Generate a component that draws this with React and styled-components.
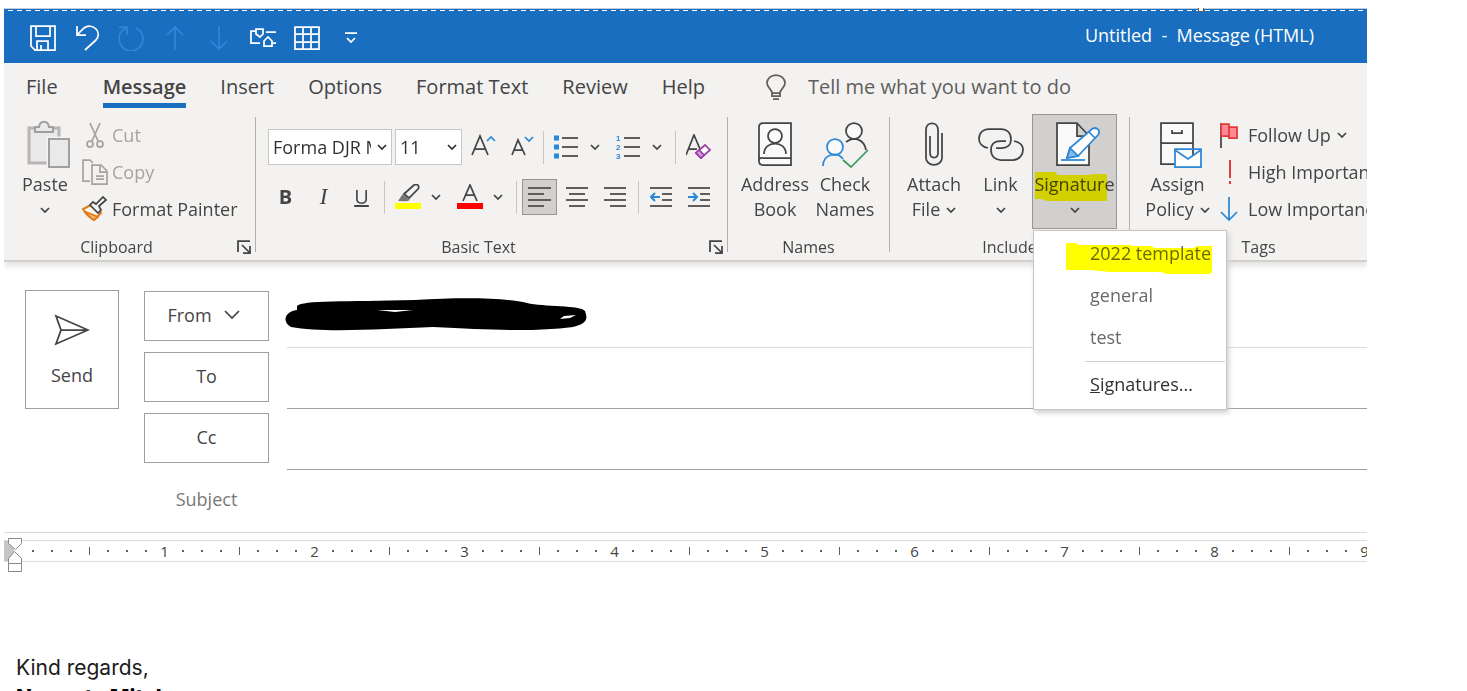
import styled, { createGlobalStyle, css } from 'styled-components';

const GlobalStyle = createGlobalStyle`
    :root {
        --blue: #196ebf;
        --sky: #2b88d8;
        --grey: #f3f2f1;
        --line: #b3b0ad;
        --ink: #444444;
        --muted: #a6a4a2;
    }

    * {
        box-sizing: border-box;
    }

    body {
        margin: 0;
        background: #fff;
        color: var(--ink);
        font-family: "Open Sans", "Noto Sans", sans-serif;
        font-size: 18px;
    }

    button, input, select {
        font: inherit;
        color: inherit;
    }

    button {
        padding: 0;
        border: 0;
        background: none;
    }

    svg {
        display: block;
        flex: none;
    }
`;

const Window = styled.div`
    height: 100vh;
    padding: 8px 100px 0 4px;
    overflow: hidden;
`;

const TitleBar = styled.header`
    position: relative;
    display: flex;
    justify-content: space-between;
    align-items: center;
    height: 55px;
    padding: 0 53px 0 20px;
    border-top: 1px solid #c3ccd8;
    background: var(--blue);
    color: #fff;

    h1 {
        margin: 0;
        padding-bottom: 2px;
        font-size: 18px;
        font-weight: 400;
        white-space: pre;
    }
`;

const DashedEdge = styled.div`
    position: absolute;
    top: 1px;
    left: 0;
    right: 0;
    height: 1px;
    background: repeating-linear-gradient(90deg, transparent 0 4px, #fff 4px 9px);
`;

const DragHandle = styled.span`
    position: absolute;
    top: -1px;
    right: 163px;
    width: 6px;
    height: 4px;
    border: 1px solid #605e5c;
    border-top: 0;
    background: #fff;
`;

const QuickAccess = styled.div`
    display: flex;
    align-items: center;
    height: 54px;
    padding-top: 4px;
`;

const QuickButton = styled.button`
    display: grid;
    place-items: center;
    width: 38px;
    height: 38px;
    margin-right: 6px;
    color: ${({disabled}) => disabled ? '#2f87d8' : '#fff'};
`;

const Tabs = styled.nav`
    display: flex;
    gap: 34px;
    height: 47px;
    padding: 0 22px;
    background: var(--grey);
    font-size: 20px;
    line-height: 48px;
    white-space: nowrap;
`;

const Tab = styled.a`
    color: inherit;
    text-decoration: none;

    &:first-child {
        margin-right: 11px;
    }

    ${({$active}) => $active && css`
        height: 45px;
        border-bottom: 5px solid var(--blue);
        font-weight: 600;
    `}
`;

const TellMe = styled.label`
    display: flex;
    flex: 1;
    align-items: center;
    gap: 22px;
    margin-left: 27px;
    color: #605e5c;

    input {
        flex: 1;
        min-width: 0;
        padding: 0;
        border: 0;
        background: none;

        &::placeholder {
            color: #605e5c;
            opacity: 1;
        }
    }
`;

const Ribbon = styled.div`
    display: flex;
    height: 152px;
    padding-top: 4px;
    background: var(--grey);
    border-bottom: 2px solid #d2d0ce;
    box-shadow: 0 4px 6px #e4e3e2;
    clip-path: inset(0 0 -200px 0);
`;

const Group = styled.section`
    display: flex;
    flex: none;
    flex-direction: column;
    justify-content: space-between;
    width: ${({$width}) => $width}px;
    height: 140px;
`;

const GroupBody = styled.div`
    display: flex;
    padding: 0 9px 0 ${({$left}) => $left}px;
`;

const GroupFooter = styled.footer`
    display: flex;
    align-items: center;
    height: 14px;
    font-size: 16px;
    line-height: 14px;

    h2 {
        flex: 1;
        margin: 0;
        font-size: inherit;
        font-weight: 400;
        text-align: center;
    }

    button {
        width: 26px;
        padding-left: 8px;
    }
`;

const GroupLine = styled.div`
    flex: none;
    width: 1px;
    height: 135px;
    margin-top: 3px;
    background: var(--line);
`;

const BigButton = styled.button`
    display: flex;
    flex: none;
    flex-direction: column;
    align-items: center;
    width: ${({$width}) => $width}px;
    height: 115px;
    padding-top: 6px;
    line-height: 25px;
    white-space: nowrap;

    > svg {
        margin-bottom: 4px;
    }

    ${({$pressed}) => $pressed && css`
        padding-top: 5px;
        border: 1px solid #979593;
        background: #d2d0ce;
    `}
`;

const ChevronLine = styled.span`
    display: flex;
    align-items: center;
    gap: 6px;
    height: 25px;
`;

const SmallList = styled.div`
    display: flex;
    flex-direction: column;
    margin-top: 2px;
`;

const SmallButton = styled.button`
    display: flex;
    align-items: center;
    gap: 4px;
    height: 37px;
    color: ${({disabled}) => disabled ? 'var(--muted)' : 'inherit'};
    white-space: nowrap;
`;

const FormatRows = styled.div`
    display: grid;
    gap: 14px;
    padding-top: 15px;
`;

const FormatRow = styled.div`
    display: flex;
    align-items: center;
    gap: 3px;
    height: 36px;
`;

const Combo = styled.label`
    display: grid;
    align-items: center;
    width: ${({$width}) => $width}px;
    height: 36px;
    border: 1px solid #c8c6c4;
    background: #fff;
    color: #323130;

    select, svg {
        grid-area: 1 / 1;
    }

    select {
        width: 100%;
        height: 34px;
        padding: 0 20px 0 4px;
        border: 0;
        background: none;
        appearance: none;
        text-overflow: clip;
    }

    svg {
        justify-self: end;
        margin-right: 4px;
        pointer-events: none;
    }
`;

const IconButton = styled.button`
    display: grid;
    place-items: center;
    width: 35px;
    height: 36px;
    border: 1px solid ${({$pressed}) => $pressed ? '#979593' : 'transparent'};
    background: ${({$pressed}) => $pressed ? '#d2d0ce' : 'none'};
    font-size: 20px;
    line-height: 30px;
    font-weight: ${({$bold}) => $bold ? 700 : 400};
`;

const Italic = styled.i`
    font-family: "Liberation Serif", serif;
    font-size: 23px;
`;

const Split = styled.div`
    display: flex;
`;

const ArrowButton = styled.button`
    display: grid;
    justify-content: start;
    align-items: center;
    width: 24px;
    height: 36px;
    padding-left: 6px;
`;

const RowLine = styled.span`
    width: 1px;
    height: 33px;
    margin: 0 2px;
    background: #c8c6c4;
`;

const MenuAnchor = styled.div`
    position: relative;
`;

const Menu = styled.ul`
    position: absolute;
    z-index: 2;
    top: 116px;
    left: 1px;
    width: 194px;
    height: 180px;
    margin: 0;
    padding: 1px;
    border: 1px solid #c8c6c4;
    background: #fff;
    box-shadow: 2px 3px 5px #d2d0ce;
    list-style: none;

    li:last-child {
        margin: 3px 0 0 50px;
        padding-top: 1px;
        border-top: 1px solid #d2d0ce;
    }
`;

const MenuItem = styled.button`
    display: block;
    position: relative;
    height: 42px;
    padding-left: ${({$inset}) => $inset}px;
    color: ${({$dark}) => $dark ? '#323130' : '#6b6967'};
    white-space: nowrap;
`;

const Marker = styled.svg`
    position: absolute;
    top: ${({$top}) => $top}px;
    left: ${({$left}) => $left}px;
    mix-blend-mode: multiply;
`;

const Compose = styled.form`
    display: flex;
    align-items: flex-start;
    gap: 25px;
    padding: 25px 0 1px 21px;
    border-bottom: 1px solid #d9d9d9;
`;

const SendButton = styled.button`
    display: flex;
    flex: none;
    flex-direction: column;
    align-items: center;
    gap: 16px;
    width: 94px;
    height: 119px;
    margin-top: 3px;
    padding-top: 22px;
    border: 1px solid #a19f9d;
`;

const Fields = styled.div`
    flex: 1;
    min-width: 0;
`;

const Field = styled.div`
    display: flex;
    height: 61px;

    > button, > label {
        display: flex;
        justify-content: center;
        align-items: center;
        gap: 12px;
        width: 125px;
        height: 50px;
        margin: 4px 18px 0 0;
    }

    > button {
        padding: 0 6px 2px 0;
        border: 1px solid #a19f9d;
    }

    > button:only-of-type:not(:has(svg)) {
        padding-right: 0;
    }

    > label {
        color: #7a7876;
    }
`;

const Entry = styled.div`
    display: flex;
    flex: 1;
    align-items: center;
    border-bottom: 1px solid ${({$line}) => $line};

    input {
        flex: 1;
        min-width: 0;
        border: 0;
        outline: 0;
        background: none;
    }
`;

const Redacted = styled.svg`
    margin: -4px 0 0 -2px;
`;

const Ruler = styled.div`
    position: relative;
    display: flex;
    height: 22px;
    margin-top: 7px;
    border: solid #dddbda;
    border-width: 1px 0;
    font-size: 15px;
    line-height: 20px;
`;

const RulerClip = styled.div`
    display: flex;
    flex: 1;
    padding-left: 10px;
    overflow: hidden;
`;

const RulerMargin = styled.span`
    width: 10px;
    background: #c8c6c4;
`;

const Inch = styled.div`
    display: grid;
    flex: none;
    grid-template-columns: repeat(8, 1fr);
    place-items: center;
    width: 150px;
`;

const Tick = styled.span`
    width: ${({$half}) => $half ? 1 : 2}px;
    height: ${({$half}) => $half ? 8 : 2}px;
    background: #605e5c;
`;

const IndentMarker = styled.svg`
    position: absolute;
    top: -4px;
    left: 4px;
`;

const Message = styled.article`
    padding: 91px 12px 0;
    color: #1b1b1b;
    font-family: Inter, "Liberation Sans", sans-serif;
    font-size: 21px;
    line-height: 30px;

    p {
        margin: 0;
    }

    b {
        color: #000;
        font-weight: 800;
    }
`;

function Icon({w = 26, h = w, sw = 1.75, children}) {
    return (
        <svg width={w} height={h} viewBox={`0 0 ${w} ${h}`} fill="none" stroke="currentColor" strokeWidth={sw} aria-hidden="true">
            {children}
        </svg>
    );
}

function Chevron() {
    return <Icon w={10} h={6}><path d="M1 1l4 4 4-4"/></Icon>;
}

const quickItems = [
    {name: 'Save', icon: <path d="M1 1h24v24H5l-4-4zM6 1v10h14V1M7 25v-9h11v9M11 20v5"/>},
    {name: 'Undo', icon: <path d="M3 1v9h9M3 10l7-7c4-3 9-2 12 1s3 8 0 11L11 25"/>},
    {name: 'Redo', off: true, icon: <path d="M1 2h8v8M9 3C3 5 1 9 1 14a12 12 0 1 0 17-11"/>},
    {name: 'Previous item', off: true, icon: <path d="M13 25V2M5 10l8-8 8 8"/>},
    {name: 'Next item', off: true, icon: <path d="M13 1v23M5 16l8 8 8-8"/>},
    {name: 'Mode', icon: <path d="M6 6H1v12h9M6 4h7v5l-3 3-4-3zM16 7h10M14 21v-5l4-4 4 4v5zM23 18h3"/>},
    {name: 'Table', icon: <path d="M1 2h24v22H1zM1 9h24M1 17h24M9 2v22M17 2v22"/>},
];

const tabs = ['File', 'Message', 'Insert', 'Options', 'Format Text', 'Review', 'Help'];

function Launcher({name}) {
    return (
        <button aria-label={name}>
            <Icon w={14}><path d="M1 12V1h12M5 5l7 7M13 6v7H6"/></Icon>
        </button>
    );
}

function Lines({rows}) {
    return (
        <Icon w={24} sw={2}>
            <path stroke="#605e5c" d={rows.map(([x, w], i) => `M${x} ${3 + i * 6}h${w}`).join('')}/>
        </Icon>
    );
}

function Clipboard() {
    return (
        <Group $width={251}>
            <GroupBody $left={16}>
                <BigButton $width={50}>
                    <svg width="52" height="48" viewBox="-8 0 52 48" fill="#e9e9e9" stroke="#a19f9d" strokeWidth="2" aria-hidden="true">
                        <path d="M2 8h30v35H2z" stroke="#b8b6b4" strokeWidth="3"/>
                        <path d="M8 12V7h4c1-7 9-7 10 0h4v5z"/>
                        <path d="M22 19h20v28H22z" stroke="#f3f2f1" strokeWidth="5"/>
                        <path d="M22 19h20v28H22z"/>
                    </svg>
                    Paste
                    <ChevronLine><Chevron/></ChevronLine>
                </BigButton>
                <SmallList>
                    <SmallButton disabled>
                        <Icon w={38} h={26}>
                            <path d="M20 1l8 18M30 1l-8 18"/><circle cx="20" cy="22" r="3"/><circle cx="30" cy="22" r="3"/>
                        </Icon>
                        Cut
                    </SmallButton>
                    <SmallButton disabled>
                        <Icon w={38} h={26}>
                            <path d="M20 22h-7V1h7l3 3M22 6h9l6 6v13H22zM30 6v7h7M26 17h8M26 20h8"/>
                        </Icon>
                        Copy
                    </SmallButton>
                    <SmallButton>
                        <Icon w={38} h={26}>
                            <path stroke="#e07a1a" strokeWidth="2" fill="#fdf3e8" d="M21 9l-8 4c2 5 6 8 11 11l7-7z"/>
                            <path stroke="#e07a1a" fill="#f6b26b" d="M16 16l12 5-4 3c-4-2-6-4-8-8z"/>
                            <path fill="#f3f2f1" d="M23 6l3 2 7-7 3 3-7 6 2 4-3 3-8-8z"/>
                        </Icon>
                        Format Painter
                    </SmallButton>
                </SmallList>
            </GroupBody>
            <GroupFooter><h2>Clipboard</h2><Launcher name="Clipboard options"/></GroupFooter>
        </Group>
    );
}

function BasicText() {
    return (
        <Group $width={471}>
            <GroupBody $left={12}>
                <FormatRows>
                    <FormatRow>
                        <Combo $width={124}>
                            <select aria-label="Font"><option>Forma DJR Micro</option></select>
                            <Chevron/>
                        </Combo>
                        <Combo $width={67}>
                            <select aria-label="Font size"><option>11</option></select>
                            <Chevron/>
                        </Combo>
                        <IconButton aria-label="Grow font">
                            <Icon w={26}><path d="M2 21l8-19 8 19M5 15h11"/><path stroke="var(--sky)" d="M17 7l4-4 4 4"/></Icon>
                        </IconButton>
                        <IconButton aria-label="Shrink font">
                            <Icon w={26}><path d="M4 21l6-15 7 15M6 16h9"/><path stroke="var(--sky)" d="M17 3l4 4 4-4"/></Icon>
                        </IconButton>
                        <RowLine/>
                        <Split>
                            <IconButton aria-label="Bullets">
                                <Icon w={26} sw={2}>
                                    <path stroke="#605e5c" d="M8 4h16M8 13h16M8 22h16"/>
                                    <path stroke="var(--sky)" strokeWidth="5" d="M0 4h5M0 13h5M0 22h5"/>
                                </Icon>
                            </IconButton>
                            <ArrowButton aria-label="Bullet styles"><Chevron/></ArrowButton>
                        </Split>
                        <Split>
                            <IconButton aria-label="Numbering">
                                <Icon w={26} sw={2}>
                                    <path stroke="#605e5c" d="M8 4h16M8 13h16M8 22h16"/>
                                    <g fill="var(--sky)" stroke="none" fontFamily="Liberation Sans, sans-serif" fontSize="8" fontWeight="700">
                                        <text x="0" y="7">1</text><text x="0" y="16">2</text><text x="0" y="25">3</text>
                                    </g>
                                </Icon>
                            </IconButton>
                            <ArrowButton aria-label="Number styles"><Chevron/></ArrowButton>
                        </Split>
                        <RowLine/>
                        <IconButton aria-label="Clear formatting">
                            <Icon w={26}>
                                <path d="M0 21L8 1l6 14M3 15h8"/>
                                <path stroke="#9b3fa8" fill="#fff" d="M10 19l9-8 5 5-9 8z"/>
                                <path stroke="#9b3fa8" fill="#d59ddd" d="M10 19l3-3 5 5-3 3z"/>
                            </Icon>
                        </IconButton>
                    </FormatRow>
                    <FormatRow>
                        <IconButton $bold>B</IconButton>
                        <IconButton aria-label="Italic"><Italic>I</Italic></IconButton>
                        <IconButton><u>U</u></IconButton>
                        <RowLine/>
                        <Split>
                            <IconButton aria-label="Highlight color">
                                <Icon w={26}>
                                    <path stroke="#ff0" strokeWidth="6" d="M0 22h26"/>
                                    <path d="M9 10l10-9c3-2 6 1 4 4l-9 9z"/>
                                    <path fill="#797775" stroke="none" d="M8 10l7 6c-3 2-6 1-12 1 2-3 3-5 5-7z"/>
                                </Icon>
                            </IconButton>
                            <ArrowButton aria-label="Highlight colors"><Chevron/></ArrowButton>
                        </Split>
                        <Split>
                            <IconButton aria-label="Font color">
                                <Icon w={26}>
                                    <path stroke="#f00" strokeWidth="6" d="M0 22h26"/>
                                    <path d="M6 17l7-16 7 16M9 11h8"/>
                                </Icon>
                            </IconButton>
                            <ArrowButton aria-label="Font colors"><Chevron/></ArrowButton>
                        </Split>
                        <RowLine/>
                        <IconButton $pressed aria-label="Align left"><Lines rows={[[0, 23], [0, 16], [0, 23], [0, 16]]}/></IconButton>
                        <IconButton aria-label="Center"><Lines rows={[[0, 22], [3, 16], [0, 22], [3, 16]]}/></IconButton>
                        <IconButton aria-label="Align right"><Lines rows={[[0, 22], [6, 16], [0, 22], [6, 16]]}/></IconButton>
                        <RowLine/>
                        <IconButton aria-label="Decrease indent">
                            <Icon w={24} sw={2}>
                                <path stroke="#605e5c" d="M0 3h22M12 9h10M12 15h10M0 21h22"/>
                                <path stroke="var(--sky)" d="M10 12H1M5 8l-4 4 4 4"/>
                            </Icon>
                        </IconButton>
                        <IconButton aria-label="Increase indent">
                            <Icon w={24} sw={2}>
                                <path stroke="#605e5c" d="M0 3h22M12 9h10M12 15h10M0 21h22"/>
                                <path stroke="var(--sky)" d="M0 12h9M5 8l4 4-4 4"/>
                            </Icon>
                        </IconButton>
                    </FormatRow>
                </FormatRows>
            </GroupBody>
            <GroupFooter><h2>Basic Text</h2><Launcher name="Font options"/></GroupFooter>
        </Group>
    );
}

function Names() {
    return (
        <Group $width={161}>
            <GroupBody $left={12}>
                <BigButton $width={70}>
                    <Icon w={36} h={48}>
                        <path fill="#fafafa" d="M2 41V7q0-4 4-4h28v42H6q-4 0-4-4t4-3h28"/>
                        <circle cx="18" cy="16" r="7"/><path d="M7 34c0-14 22-14 22 0"/>
                    </Icon>
                    <span>Address</span>
                    <span>Book</span>
                </BigButton>
                <BigButton $width={70}>
                    <Icon w={48}>
                        <circle cx="33" cy="11" r="8" fill="#fafafa"/><path d="M25 22c8-6 18-3 20 8"/>
                        <g stroke="var(--sky)"><circle cx="14" cy="27" r="8" fill="#fafafa"/><path d="M2 46c0-12 14-15 20-7"/></g>
                        <path stroke="#3f9b5c" d="M22 40l8 7 17-17"/>
                    </Icon>
                    <span>Check</span>
                    <span>Names</span>
                </BigButton>
            </GroupBody>
            <GroupFooter><h2>Names</h2></GroupFooter>
        </Group>
    );
}

function SignatureMenu() {
    return (
        <Menu>
            <li>
                <MenuItem $inset={55}>
                    2022 template
                    <Marker $top={10} $left={31} width="147" height="32" viewBox="0 0 147 32" aria-hidden="true">
                        <path fill="#ff0" d="M0 1h11l1 2h52l2 1h20l2 2h40l3-2h15v27h-2v1H101l-6-2H44l-20-2H0z"/>
                    </Marker>
                </MenuItem>
            </li>
            <li><MenuItem $inset={55}>general</MenuItem></li>
            <li><MenuItem $inset={55}>test</MenuItem></li>
            <li><MenuItem $inset={5} $dark><u>S</u>ignatures...</MenuItem></li>
        </Menu>
    );
}

function Include() {
    return (
        <Group $width={239}>
            <GroupBody $left={9}>
                <BigButton $width={70}>
                    <Icon w={20} h={48}>
                        <path d="M6 16v17c0 6 8 6 8 0V10c0-9-12-9-12 0v28c0 9 16 9 16 0V13"/>
                    </Icon>
                    <span>Attach</span>
                    <ChevronLine>File <Chevron/></ChevronLine>
                </BigButton>
                <BigButton $width={63}>
                    <Icon w={46} h={48}>
                        <path d="M10 28C4 27 1 23 1 19c0-6 4-10 10-10h12c6 0 10 4 10 10s-4 9-9 9h-6"/>
                        <path d="M36 21c5 1 9 4 9 9s-4 10-10 10H23c-6 0-10-4-10-10s4-9 9-9h6"/>
                    </Icon>
                    <span>Link</span>
                    <ChevronLine><Chevron/></ChevronLine>
                </BigButton>
                <MenuAnchor>
                    <BigButton $width={85} $pressed aria-expanded="true">
                        <Icon w={52} h={48}>
                            <g transform="translate(5)">
                                <path fill="#fafafa" d="M3 3h20l12 13v29H3zM23 3v13h12"/>
                                <g stroke="var(--sky)">
                                    <path d="M7 40h24"/>
                                    <path fill="#fff" d="M13 38l3-10L38 9c5-3 9 2 6 6L24 36z"/>
                                    <path fill="#83b9e8" d="M16 28l8 8-11 2zM35 12l6 6"/>
                                </g>
                            </g>
                        </Icon>
                        <span>Signature</span>
                        <ChevronLine><Chevron/></ChevronLine>
                    </BigButton>
                    <Marker $top={57} $left={3} width="74" height="32" viewBox="0 0 74 32" aria-hidden="true">
                        <path fill="#ff0" d="M0 1h21l1 3h29l10-1h11v27H12l-6-2H0z"/>
                    </Marker>
                    <SignatureMenu/>
                </MenuAnchor>
            </GroupBody>
            <GroupFooter><h2>Include</h2></GroupFooter>
        </Group>
    );
}

function Tags() {
    return (
        <Group $width={257}>
            <GroupBody $left={9}>
                <BigButton $width={77}>
                    <Icon w={48}>
                        <g transform="translate(4)">
                            <path fill="#fafafa" d="M3 3h32v41H3zM3 23h32"/>
                            <path d="M14 10v3h10v-3"/>
                            <path stroke="var(--sky)" fill="#fff" d="M17 29h26v18H17zM17 30l13 9 13-9"/>
                        </g>
                    </Icon>
                    <span>Assign</span>
                    <ChevronLine>Policy <Chevron/></ChevronLine>
                </BigButton>
                <SmallList>
                    <SmallButton>
                        <Icon w={28} h={26}>
                            <path d="M5 1v25"/><path stroke="#e03a3a" fill="#ff8a94" d="M5 2h8v12H5zM13 5h8v11h-8z"/>
                        </Icon>
                        <ChevronLine>Follow Up <Chevron/></ChevronLine>
                    </SmallButton>
                    <SmallButton>
                        <Icon w={28} h={26} sw={2}><path stroke="#e03a3a" d="M14 1v18M14 22v3"/></Icon>
                        High Importance
                    </SmallButton>
                    <SmallButton>
                        <Icon w={28} h={26}><path stroke="var(--sky)" d="M13 1v23M5 16l8 8 8-8"/></Icon>
                        Low Importance
                    </SmallButton>
                </SmallList>
            </GroupBody>
            <GroupFooter><h2>Tags</h2></GroupFooter>
        </Group>
    );
}

export default function App() {
    return (
        <Window>
            <GlobalStyle/>
            <TitleBar>
                <DashedEdge/>
                <DragHandle/>
                <QuickAccess>
                    {quickItems.map(({name, off, icon}) => (
                        <QuickButton key={name} aria-label={name} disabled={off}><Icon>{icon}</Icon></QuickButton>
                    ))}
                    <QuickButton aria-label="Customize toolbar">
                        <Icon w={12}><path d="M0 1h12M2 6l4 4 4-4"/></Icon>
                    </QuickButton>
                </QuickAccess>
                <h1>Untitled  -  Message (HTML)</h1>
            </TitleBar>
            <Tabs>
                {tabs.map(tab => <Tab key={tab} href="#" $active={tab === 'Message'}>{tab}</Tab>)}
                <TellMe>
                    <Icon w={20} h={26}>
                        <path d="M6 19c0-4-5-5-5-10a9 8 0 0 1 18 0c0 5-5 6-5 10zM6 19v3h8v-3M7 25h6"/>
                    </Icon>
                    <input aria-label="Tell me" placeholder="Tell me what you want to do"/>
                </TellMe>
            </Tabs>
            <Ribbon>
                <Clipboard/>
                <GroupLine/>
                <BasicText/>
                <GroupLine/>
                <Names/>
                <GroupLine/>
                <Include/>
                <GroupLine/>
                <Tags/>
            </Ribbon>
            <Compose>
                <SendButton type="button">
                    <Icon w={36} h={34}><path d="M2 3l32 14L2 31l5-14zM7 17h27"/></Icon>
                    Send
                </SendButton>
                <Fields>
                    <Field>
                        <button type="button">From <Icon w={16} h={10}><path d="M1 1l7 7 7-7"/></Icon></button>
                        <Entry $line="#dddbda">
                            <Redacted width="304" height="34" viewBox="0 0 304 34" aria-hidden="true">
                                <path d="M12 8C18 2 60 4 130 2c50-3 90-2 112 3 16 4 54 2 58 8 3 8 2 13-12 16-40 5-80 3-140 0-50 2-110 6-142 0C-3 24-1 14 12 12z"/>
                                <path fill="#fff" d="M92 12h36l-18 2zM275 21l4-3 12-1-6 3z"/>
                            </Redacted>
                        </Entry>
                    </Field>
                    <Field>
                        <button type="button">To</button>
                        <Entry $line="#a19f9d"><input aria-label="To"/></Entry>
                    </Field>
                    <Field>
                        <button type="button">Cc</button>
                        <Entry $line="#a19f9d"><input aria-label="Cc"/></Entry>
                    </Field>
                    <Field>
                        <label htmlFor="subject">Subject</label>
                        <Entry $line="transparent"><input id="subject"/></Entry>
                    </Field>
                </Fields>
            </Compose>
            <Ruler>
                <RulerMargin/>
                <RulerClip>
                    {[1, 2, 3, 4, 5, 6, 7, 8, 9].map(inch => (
                        <Inch key={inch}>
                            {[1, 2, 3, 4, 5, 6, 7].map(n => <Tick key={n} $half={n === 4}/>)}
                            <span>{inch}</span>
                        </Inch>
                    ))}
                </RulerClip>
                <IndentMarker width="14" height="36" viewBox="0 0 14 36" fill="#fff" stroke="#8a8886" aria-hidden="true">
                    <path d="M.5 1.5h13v5l-6 6-7-6zM.5 26.5v-5l6-7 7 7v5zM.5 26.5h13v8H.5z"/>
                </IndentMarker>
            </Ruler>
            <Message>
                <p>Kind regards,</p>
                <p><b>Namrata Mitch</b></p>
            </Message>
        </Window>
    );
}
